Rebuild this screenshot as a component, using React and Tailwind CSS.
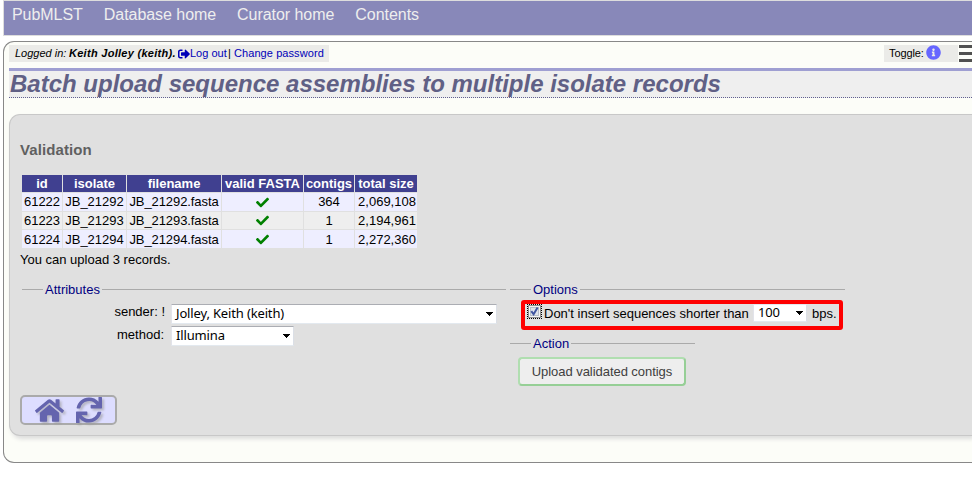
import { FaCheck, FaHome, FaInfoCircle, FaSignOutAlt, FaSync } from "react-icons/fa";

const rows = [
  ["61222", "JB_21292", "JB_21292.fasta", "364", "2,069,108"],
  ["61223", "JB_21293", "JB_21293.fasta", "1", "2,194,961"],
  ["61224", "JB_21294", "JB_21294.fasta", "1", "2,272,360"],
];

const columns = ["id", "isolate", "filename", "valid FASTA", "contigs", "total size"];

function Legend({ children, className = "" }) {
  return (
    <div className={`flex h-[17px] items-center text-[13px] leading-[17px] text-[#000080] ${className}`}>
      <span className="h-px w-[21px] bg-[#aaa]" />
      <span className="px-[2px]">{children}</span>
      <span className="h-px flex-1 bg-[#aaa]" />
    </div>
  );
}

function SelectBox({ value, className }) {
  return (
    <div
      className={`flex items-center justify-between border border-t-[#abadb3] border-r-[#dbdfe6] border-b-[#e3e9ef] border-l-[#e2e3ea] bg-white pr-[3px] pl-[4px] font-['Noto_Sans',sans-serif] text-[13px] leading-[17px] tracking-[-0.15px] text-black ${className}`}
    >
      <span className="-mt-px">{value}</span>
      <svg className="h-[4px] w-[7px]" viewBox="0 0 7 4" shapeRendering="crispEdges">
        <path d="M0 0h7v1h-1v1h-1v1h-1v1h-1v-1h-1v-1h-1v-1h-1z" />
      </svg>
    </div>
  );
}

function ValidationTable() {
  return (
    <div className="mt-[15px] ml-[2px] grid w-[395px] grid-cols-[40px_63px_94px_81px_50px_62px] grid-rows-[17px_18px_17px_18px] gap-px text-center text-[13px] whitespace-nowrap text-black">
      {columns.map((name) => (
        <div key={name} className="bg-[#404090] leading-[17px] font-bold text-white">{name}</div>
      ))}
      {rows.map(([id, isolate, file, contigs, size], i) => {
        const bg = ["bg-[#eef] leading-[17px]", "bg-[#eee] leading-[17px]", "bg-[#eef] leading-[19px]"][i];
        return [
          <div key={`${id}-id`} className={bg}>{id}</div>,
          <div key={`${id}-isolate`} className={bg}>{isolate}</div>,
          <div key={`${id}-file`} className={`-tracking-[0.08px] ${bg}`}>{file}</div>,
          <div key={`${id}-valid`} className={`flex items-center justify-center ${bg}`}>
            <FaCheck className="size-[13px] text-[#008000]" />
          </div>,
          <div key={`${id}-contigs`} className={bg}>{contigs}</div>,
          <div key={`${id}-size`} className={`pl-[2px] ${bg}`}>{size}</div>,
        ];
      })}
    </div>
  );
}

export default function App() {
  return (
    <div className="h-[490px] w-[972px] overflow-hidden bg-white pl-[3px] font-['Liberation_Sans',Arial,sans-serif]">
      <nav className="flex h-[36px] gap-[21px] border border-r-0 border-[#ddd] bg-[#8888b9] pl-[8px] text-[16px] leading-[27px] tracking-[-0.05px] text-[#eee]">
        <span>PubMLST</span>
        <span>Database home</span>
        <span>Curator home</span>
        <span>Contents</span>
      </nav>

      <main className="mt-[5px] h-[422px] rounded-l-[11px] border border-r-0 border-[#888] bg-[#fcfdf8] pt-[3px] pl-[5px]">
        <div className="flex h-[17px] justify-between text-[11px] leading-[17px] text-black">
          <div className="flex w-[320px] items-center bg-[#ebebe8] pl-[6px] whitespace-nowrap">
            <span className="w-[54px] italic">Logged in:</span>
            <span className="w-[107px] font-bold tracking-[0.28px] italic">Keith Jolley (keith).</span>
            <FaSignOutAlt className="ml-[2px] size-[12px] shrink-0 text-[#0000b8]" />
            <span className="w-[38px] text-[#0000b8]">Log out</span>
            <span className="w-[6px]">|</span>
            <span className="tracking-[0.08px] text-[#0000b8]">Change password</span>
          </div>
          <div className="flex">
            <div className="flex w-[74px] items-center bg-[#ebebe8] pl-[5px]">
              <span className="w-[37px] shrink-0 tracking-[-0.1px]">Toggle:</span>
              <FaInfoCircle className="mb-[2px] size-[15px] shrink-0 text-[#6666ff]" />
            </div>
            <div className="ml-px flex w-[13px] flex-col justify-between">
              <span className="h-[3px] bg-[#505050]" />
              <span className="h-[3px] bg-[#505050]" />
              <span className="h-[3px] bg-[#505050]" />
            </div>
          </div>
        </div>

        <h1 className="mt-[6px] h-[30px] border-t-[3px] border-b border-t-[#9f9fd2] border-b-[#606090] bg-[#efefef] pl-px text-[24px] leading-[25px] font-bold text-[#606085] italic [border-bottom-style:dotted]">
          Batch upload sequence assemblies to multiple isolate records
        </h1>

        <section className="mt-[16px] h-[322px] rounded-l-[11px] border border-r-0 border-[#c8c8c8] bg-[#e0e0e0] pl-[10px] shadow-[2px_3px_4px_#ddd]">
          <h2 className="pt-[25px] text-[15px] leading-[20px] font-bold tracking-[0.1px] text-[#606060]">Validation</h2>
          <ValidationTable />
          <p className="mt-[3px] text-[13px] leading-[17px] text-black">You can upload 3 records.</p>

          <div className="mt-[13px] ml-[2px] flex h-[114px]">
            <div className="w-[484px]">
              <Legend>Attributes</Legend>
              <div className="mt-[5px] flex h-[22px]">
                <label className="w-[143px] text-right text-[13px] leading-[18px] text-black">sender: !</label>
                <SelectBox value="Jolley, Keith (keith)" className="mt-[1px] ml-[6px] h-[20px] w-[326px]" />
              </div>
              <div className="flex h-[22px]">
                <label className="w-[142px] text-right text-[13px] leading-[20px] text-black">method:</label>
                <SelectBox value="Illumina" className="mt-[1px] ml-[7px] h-[20px] w-[123px]" />
              </div>
            </div>

            <div className="ml-[4px]">
              <Legend className="w-[335px]">Options</Legend>
              <div className="mt-[2px] ml-[11px] flex h-[30px] w-[322px] rounded-[3px] border-[4px] border-[#fe0000] pl-[2px] text-[13px] leading-[19px] whitespace-nowrap text-black">
                <span className="flex size-[15px] items-center justify-center border border-dotted border-black">
                  <svg className="size-[13px] shrink-0" viewBox="0 0 13 13">
                    <rect x=".5" y=".5" width="12" height="12" fill="#f4f4f4" stroke="#8e8f8f" />
                    <rect x="2.5" y="2.5" width="8" height="8" fill="#dfe3ea" stroke="#b8bfc9" />
                    <path d="M3.3 6.2 5.6 9.3 9.6 2.6" fill="none" stroke="#4156a0" strokeWidth="2" />
                  </svg>
                </span>
                <span className="ml-[2px] w-[209px]">Don't insert sequences shorter than</span>
                <SelectBox value="100" className="h-[18px] w-[54px] border-t-[#e3e9ef]" />
                <span className="ml-[5px]">bps.</span>
              </div>
              <Legend className="mt-[5px] w-[185px]">Action</Legend>
              <button className="mt-[5px] ml-[8px] block h-[29px] w-[168px] rounded-[4px] border-2 border-t-[#b0deb0] border-r-[#96cf96] border-b-[#96cf96] border-l-[#b0deb0] bg-[#eee] text-[13px] leading-[24px] tracking-[-0.05px] text-[#404040]">
                Upload validated contigs
              </button>
            </div>
          </div>

          <div className="flex h-[30px] w-[97px] items-center rounded-[5px] border-2 border-[#aaa] bg-[#ddf] pl-[13px]">
            <FaHome className="size-[29px] shrink-0 text-[#6464ae] drop-shadow-[2px_2px_1px_#9999]" />
            <FaSync className="mb-[1px] ml-[12px] size-[26px] shrink-0 text-[#6464ae] drop-shadow-[2px_2px_1px_#9999]" />
          </div>
        </section>
      </main>
    </div>
  );
}
